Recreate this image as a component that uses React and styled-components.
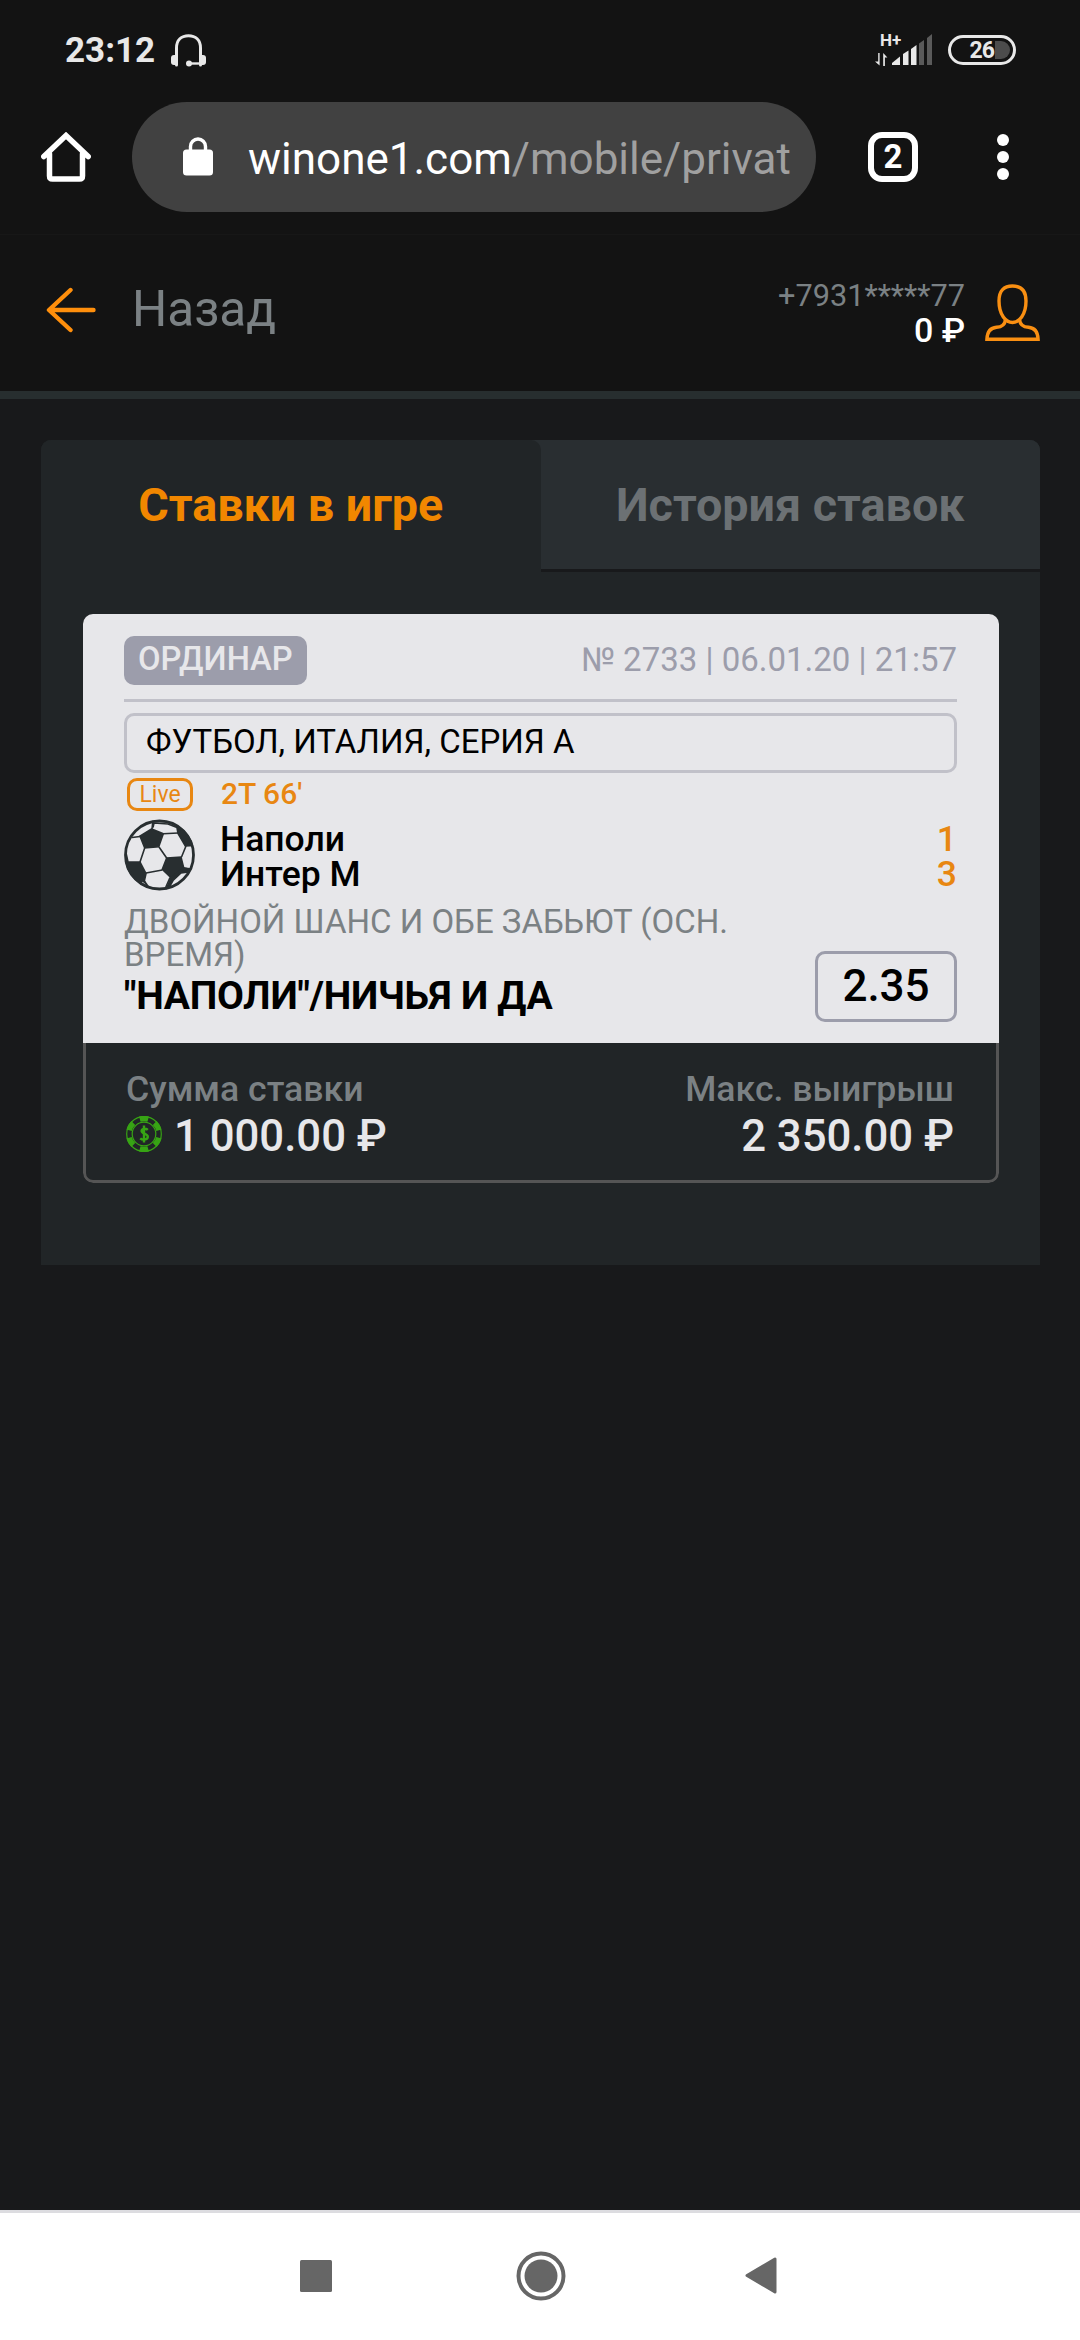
import React from "react";
import styled, { createGlobalStyle, css } from "styled-components";

const Palette = {
  chrome: "#131313",
  page: "#18191b",
  panel: "#212527",
  tab: "#292e31",
  line: "#272e2f",
  card: "#e7e7ea",
  orange: "#f18700",
  liveOrange: "#e88712",
  grey: "#7b8184",
  lilac: "#9c9dab",
};

const { chrome, page, panel, tab, line, card, orange, liveOrange, grey, lilac } =
  Palette;

const teams = [
  { id: 1, name: "Наполи", score: "1" },
  { id: 2, name: "Интер М", score: "3" },
];

const HeadsetSvg = () => (
  <svg width="35" height="33" viewBox="0 0 35 33" fill="none">
    <path
      d="M5.5 31V14C5.5 6 10.5 1.7 17.5 1.7S29.5 6 29.5 14V31"
      stroke="#e8e8e8"
      strokeWidth="3"
      strokeLinecap="round"
    />
    <rect x="0" y="21" width="7" height="10" rx="3" fill="#e8e8e8" />
    <rect x="28" y="21" width="7" height="10" rx="3" fill="#e8e8e8" />
    <path d="M18 29.5H29" stroke="#e8e8e8" strokeWidth="2.4" />
    <circle cx="18" cy="29.5" r="3" fill="#e8e8e8" />
  </svg>
);

const SignalSvg = () => (
  <svg width="58" height="32" viewBox="0 0 58 32" fill="#e8e8e8">
    <path d="M3.2 19v8.5H0l4.6 4V19zM8.2 32V19l4.2 4.6H9.9V32z" />
    <path d="M17 31v-2l8-6.5v8.5z" />
    <path d="M28 31V20l5.5-3.500V31z" />
    <path d="M36 31V15l5.5-4V31z" />
    <path d="M44 31V9.5L49 6v25z" fill="#5a5a5a" />
    <path d="M52 31V4l5-4v31z" fill="#5a5a5a" />
  </svg>
);

const HomeSvg = () => (
  <svg width="50" height="50" viewBox="0 0 50 50" fill="none">
    <path
      d="M2.8 24.5L25 3.5L47.2 24.5M8.5 22V44Q8.5 47 11.5 47H38.5Q41.5 47 41.5 44V22"
      stroke="#fff"
      strokeWidth="5.5"
      strokeLinecap="round"
    />
  </svg>
);

const LockSvg = () => (
  <svg width="30" height="39" viewBox="0 0 30 39" fill="none">
    <rect y="12.5" width="30" height="26" rx="3.5" fill="#fff" />
    <path d="M7.5 14V9.5a7.5 7.5 0 0 1 15 0V14" stroke="#fff" strokeWidth="3.4" />
  </svg>
);

const ArrowSvg = () => (
  <svg width="50" height="46" viewBox="0 0 50 46" fill="none">
    <path
      d="M24.5 3L3 23L24.5 43M3.5 23H47.5"
      stroke="#ff8f0c"
      strokeWidth="4.4"
      strokeLinecap="round"
      strokeLinejoin="round"
    />
  </svg>
);

const UserSvg = () => (
  <svg width="55" height="58" viewBox="0 0 55 58" fill="none">
    <g stroke="#f98f12" strokeWidth="3.4">
      <path d="M14 17C14 6.5 19 2 27.5 2S41 6.5 41 17C41 31 34 38.5 27.5 38.5S14 31 14 17Z" />
      <path d="M20.3 36C20 40.5 17 43 11.500 43.3C5.5 43.8 2.2 48 1.900 55.3H53.1C52.8 48 49.5 43.8 43.5 43.3C38 43 35 40.5 34.7 36" />
    </g>
  </svg>
);

const BallSvg = () => (
  <svg width="71" height="72" viewBox="0 0 71 72">
    <defs>
      <clipPath id="ball">
        <circle cx="35.5" cy="36" r="35" />
      </clipPath>
    </defs>
    <g clipPath="url(#ball)" fill="#282e30" stroke="#282e30" strokeWidth="1.6">
      <path d="M27.7 10L39.3 14.700L34.700 27.700L20.700 29L16 17Z" />
      <path d="M42.700 39L57 38L59.700 49L47 58.700L38.300 50.300Z" />
      <path d="M53 8.500L54 14.500L61.300 27L72 26.500L64 8Z" />
      <path d="M0 43L16 43L22 54.500L20.300 62L24 70L8 66Z" />
      <path d="M59.700 49L65 50L64 53L57 54L49 61.500L46.500 66L42 71L47 58.700Z" />
      <path
        d="M28 10L29 1M39.300 14.700L54 14M29 8.500L30 4L44 5L53 8.500M35 28L43 39.500M20.700 29L16 43M16 17.500L8 18.500M57.500 38L62 27M59.700 49L68 50M46 58.500L41 70M38.300 51L22 54M20.300 62L26 70M2 34L4 43"
        fill="none"
      />
    </g>
    <path d="M18 63.500L21 66" stroke="#c9cacd" strokeWidth="1.800" />
    <circle cx="35.5" cy="36" r="34" fill="none" stroke="#282e30" strokeWidth="2.8" />
  </svg>
);

const ChipSvg = () => (
  <svg width="36" height="36" viewBox="0 0 36 36" fill="none" stroke="#37a414">
    <circle cx="18" cy="18" r="17.3" strokeWidth="1.2" />
    <circle cx="18" cy="18" r="11.8" strokeWidth="1.2" />
    {[0, 60, 120, 180, 240, 300].map((angle) => (
      <path
        key={angle}
        d="M13.8 3.2Q18 2 22.2 3.2"
        strokeWidth="5.5"
        transform={`rotate(${angle} 18 18)`}
      />
    ))}
    <path
      d="M21.8 13.8C20.5 12.6 15.6 12 15.6 15S21.8 17.3 21.8 20.8S16 24 14.2 22.3M18 9.5V26.5"
      strokeWidth="2.4"
    />
  </svg>
);

const App = () => {
  return (
    <Screen>
      <GlobalStyle />
      <StatusBar>
        <Clock>23:12</Clock>
        <HeadsetSvg />
        <Network>
          <NetworkType>H+</NetworkType>
          <SignalSvg />
        </Network>
        <Battery>
          26
          <BatteryRest />
        </Battery>
      </StatusBar>
      <BrowserBar>
        <HomeSvg />
        <AddressField>
          <LockSvg />
          <Url>
            winone1.com<UrlPath>/mobile/privat</UrlPath>
          </Url>
        </AddressField>
        <TabCount>2</TabCount>
        <MenuDots>
          <Dot />
          <Dot />
          <Dot />
        </MenuDots>
      </BrowserBar>
      <Header>
        <ArrowSvg />
        <BackText>Назад</BackText>
        <Profile>
          <Account>
            <Phone>+7931*****77</Phone>
            <Balance>0 ₽</Balance>
          </Account>
          <UserSvg />
        </Profile>
      </Header>
      <Content>
        <Panel>
          <Tabs>
            <Tab $isActive>Ставки в игре</Tab>
            <Tab>История ставок</Tab>
          </Tabs>
          <Bet>
            <BetBody>
              <BetTop>
                <BetType>ОРДИНАР</BetType>
                <BetNumber>№ 2733 | 06.01.20 | 21:57</BetNumber>
              </BetTop>
              <League>ФУТБОЛ, ИТАЛИЯ, СЕРИЯ А</League>
              <LiveRow>
                <LiveBadge>Live</LiveBadge>
                <LiveTime>2Т 66'</LiveTime>
              </LiveRow>
              <Match>
                <BallSvg />
                <Teams>
                  {teams.map((team) => (
                    <Team key={team.id}>
                      <span>{team.name}</span>
                      <Score>{team.score}</Score>
                    </Team>
                  ))}
                </Teams>
              </Match>
              <Outcome>
                <div>
                  <Market>
                    ДВОЙНОЙ ШАНС И ОБЕ ЗАБЬЮТ (ОСН.
                    <br />
                    ВРЕМЯ)
                  </Market>
                  <Pick>"НАПОЛИ"/НИЧЬЯ И ДА</Pick>
                </div>
                <Odds>2.35</Odds>
              </Outcome>
            </BetBody>
            <BetFooter>
              <Sum>
                <SumLabel>Сумма ставки</SumLabel>
                <SumValue>
                  <ChipSvg />1 000.00 ₽
                </SumValue>
              </Sum>
              <Sum $isRight>
                <SumLabel>Макс. выигрыш</SumLabel>
                <SumValue>2 350.00 ₽</SumValue>
              </Sum>
            </BetFooter>
          </Bet>
        </Panel>
      </Content>
      <NavBar>
        <svg width="32" height="32">
          <rect width="32" height="32" rx="1.5" fill="#666" />
        </svg>
        <svg width="54" height="50">
          <circle cx="29" cy="25" r="22.5" fill="none" stroke="#666" strokeWidth="4" />
          <circle cx="29" cy="25" r="16.5" fill="#666" />
        </svg>
        <svg width="32" height="37">
          <path
            d="M2 18.5L30 2V35Z"
            fill="#666"
            stroke="#666"
            strokeWidth="3"
            strokeLinejoin="round"
          />
        </svg>
      </NavBar>
    </Screen>
  );
};

export default App;

const GlobalStyle = createGlobalStyle`
  * {
    box-sizing: border-box;
  }

  body {
    margin: 0;
    background: ${page};
    font-family: Roboto, "Noto Sans", sans-serif;
  }

  svg {
    display: block;
    flex-shrink: 0;
  }
`;

const Flex = css`
  display: flex;
  align-items: center;
`;

const Screen = styled.div`
  display: flex;
  flex-direction: column;
  width: 1080px;
  height: 2340px;
  overflow: hidden;
  background: ${page};
`;

const StatusBar = styled.div`
  ${Flex};
  height: 100px;
  padding: 0 64px 0 65px;
  background: ${chrome};
  color: #e8e8e8;
`;

const Clock = styled.div`
  width: 106px;
  font-size: 35px;
  font-weight: 700;
`;

const Network = styled.div`
  position: relative;
  margin-left: auto;
  margin-right: 15px;
`;

const NetworkType = styled.div`
  position: absolute;
  left: 5px;
  top: -4px;
  font-size: 17px;
  font-weight: 700;
  line-height: 20px;
`;

const Battery = styled.div`
  ${Flex};
  justify-content: flex-end;
  gap: 1px;
  width: 68px;
  height: 30px;
  padding-right: 3px;
  border: 3px solid #e8e8e8;
  border-radius: 15px;
  font-size: 23px;
  font-weight: 700;
  letter-spacing: -1px;
`;

const BatteryRest = styled.div`
  width: 15px;
  height: 18px;
  border-radius: 0 9px 9px 0;
  background: #4c4c4c;
`;

const BrowserBar = styled.div`
  ${Flex};
  height: 135px;
  padding: 2px 70px 23px 41px;
  border-bottom: 1px solid #171717;
  background: ${chrome};
`;

const AddressField = styled.div`
  ${Flex};
  width: 684px;
  height: 110px;
  margin: 0 52px 0 41px;
  padding-left: 51px;
  border-radius: 55px;
  background: #414141;
`;

const Url = styled.div`
  margin-left: 35px;
  padding-top: 4px;
  color: #fff;
  font-size: 44px;
  white-space: nowrap;
`;

const UrlPath = styled.span`
  color: #a0a0a0;
`;

const TabCount = styled.div`
  ${Flex};
  justify-content: center;
  width: 50px;
  height: 50px;
  border: 6px solid #fff;
  border-radius: 14px;
  color: #fff;
  font-size: 33px;
  font-weight: 700;
`;

const MenuDots = styled.div`
  display: flex;
  flex-direction: column;
  gap: 5px;
  margin-left: 79px;
`;

const Dot = styled.div`
  width: 12px;
  height: 12px;
  border-radius: 50%;
  background: #fff;
`;

const Header = styled.div`
  ${Flex};
  height: 164px;
  padding: 0 40px 6px 46px;
  border-bottom: 8px solid ${line};
  background: ${chrome};
`;

const BackText = styled.div`
  margin-left: 36px;
  padding-bottom: 3px;
  color: ${grey};
  font-size: 49.5px;
`;

const Profile = styled.div`
  ${Flex};
  gap: 20px;
  margin-left: auto;
  padding-top: 6px;
`;

const Account = styled.div`
  text-align: right;
`;

const Phone = styled.div`
  color: ${grey};
  font-size: 30.7px;
  line-height: 35px;
`;

const Balance = styled.div`
  color: #fff;
  font-size: 34px;
  font-weight: 500;
  line-height: 35px;
`;

const Content = styled.div`
  flex: 1;
  padding: 41px 40px 0 41px;
`;

const Panel = styled.div`
  height: 825px;
  border-radius: 10px 10px 0 0;
  background: ${panel};
`;

const Tabs = styled.div`
  display: flex;
  border-radius: 10px 10px 0 0;
  overflow: hidden;
  background: linear-gradient(90deg, ${panel} 40%, ${tab} 40%);
`;

const Tab = styled.div`
  ${Flex};
  justify-content: center;
  width: 50%;
  height: 132px;
  border-bottom: 3px solid ${({ $isActive }) => ($isActive ? panel : page)};
  border-radius: ${({ $isActive }) => ($isActive ? "0 10px 0 0" : "0")};
  background: ${({ $isActive }) => ($isActive ? panel : tab)};
  color: ${({ $isActive }) => ($isActive ? orange : "#6c7174")};
  font-size: 46.7px;
  font-weight: 700;
`;

const Bet = styled.div`
  margin: 42px 41px 0 42px;
  border-radius: 10px;
  overflow: hidden;
`;

const BetBody = styled.div`
  height: 429px;
  padding: 22px 42px 0 41px;
  background: ${card};
`;

const BetTop = styled.div`
  display: flex;
  justify-content: space-between;
  height: 66px;
  border-bottom: 3px solid #c1c1c9;
`;

const BetType = styled.div`
  height: 49px;
  padding: 0 14px;
  border-radius: 10px;
  background: ${lilac};
  color: ${card};
  font-size: 32.7px;
  font-weight: 500;
  line-height: 47px;
`;

const BetNumber = styled.div`
  color: ${lilac};
  font-size: 33px;
  line-height: 47px;
`;

const League = styled.div`
  height: 60px;
  margin-top: 11px;
  padding-left: 19px;
  border: 3px solid #c1c1c9;
  border-radius: 10px;
  color: #000;
  font-size: 33px;
  line-height: 51px;
`;

const LiveRow = styled.div`
  ${Flex};
  height: 33px;
  margin-top: 5px;
  padding-left: 3px;
  color: ${liveOrange};
`;

const LiveBadge = styled.div`
  width: 66px;
  height: 33px;
  border: 3px solid ${liveOrange};
  border-radius: 10px;
  font-size: 23px;
  line-height: 27px;
  text-align: center;
`;

const LiveTime = styled.div`
  margin-left: 28px;
  padding-bottom: 2px;
  font-size: 30px;
  font-weight: 500;
`;

const Match = styled.div`
  display: flex;
  margin-top: 8px;
`;

const Teams = styled.div`
  flex: 1;
  padding-top: 3px;
  padding-left: 25px;
`;

const Team = styled.div`
  display: flex;
  justify-content: space-between;
  color: #000;
  font-size: 35.5px;
  font-weight: 500;
  line-height: 35px;
`;

const Score = styled.span`
  color: ${liveOrange};
`;

const Outcome = styled.div`
  display: flex;
  justify-content: space-between;
  margin-top: 13px;
`;

const Market = styled.div`
  color: ${grey};
  font-size: 33px;
  line-height: 33px;
  white-space: nowrap;
`;

const Pick = styled.div`
  margin-top: 5px;
  color: #000;
  font-size: 39px;
  font-weight: 700;
  letter-spacing: -0.25px;
  line-height: 40px;
  white-space: nowrap;
`;

const Odds = styled.div`
  width: 142px;
  height: 71px;
  margin-top: 46px;
  border: 3px solid ${lilac};
  border-radius: 10px;
  color: #000;
  font-size: 44px;
  font-weight: 500;
  line-height: 65px;
  text-align: center;
`;

const BetFooter = styled.div`
  display: flex;
  justify-content: space-between;
  height: 140px;
  padding: 24px 42px 0 40px;
  border: 3px solid #555;
  border-top: none;
  border-radius: 0 0 10px 10px;
  background: ${panel};
`;

const Sum = styled.div`
  display: flex;
  flex-direction: column;
  align-items: ${({ $isRight }) => ($isRight ? "flex-end" : "flex-start")};
`;

const SumLabel = styled.div`
  color: ${grey};
  font-size: 35.6px;
  font-weight: 500;
  line-height: 44px;
`;

const SumValue = styled.div`
  ${Flex};
  gap: 12px;
  color: ${card};
  font-size: 43.7px;
  font-weight: 500;
  line-height: 50px;

  svg {
    margin-bottom: 4px;
  }
`;

const NavBar = styled.div`
  display: flex;
  align-items: center;
  justify-content: space-between;
  height: 130px;
  padding: 0 303px 2px 300px;
  border-top: 3px solid #dcdce0;
  background: #fff;
`;
